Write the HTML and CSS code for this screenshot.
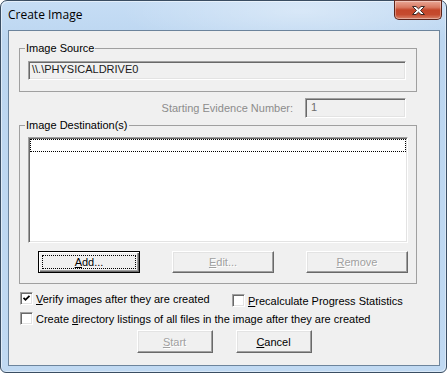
FILE: index.html
```html
<!DOCTYPE html>
<html lang="en">
<head>
    <meta charset="UTF-8">
    <meta name="viewport" content="width=device-width, initial-scale=1.0">
    <title>Create Image</title>
    <link rel="stylesheet" href="styles.css">
</head>
<body>
    <div class="window">
        <div class="titlebar">
            <span class="title">Create Image</span>
            <button class="close" title="Close">
                <svg width="15" height="11" viewBox="0 0 15 11">
                    <path d="M1.5 1.5h3.5l2.5 2.3l2.5-2.3h3.5l-4 4l4 4h-3.5l-2.5-2.3l-2.5 2.3h-3.5l4-4z" fill="#fff" stroke="#3d2a26" stroke-width="1" stroke-linejoin="round"/>
                </svg>
            </button>
        </div>

        <div class="client">
            <fieldset class="group source-group">
                <legend>Image Source</legend>
                <div class="field source-field">\\.\PHYSICALDRIVE0</div>
            </fieldset>

            <div class="evidence-row">
                <span class="disabled-label">Starting Evidence Number:</span>
                <div class="field evidence-field">1</div>
            </div>

            <fieldset class="group dest-group">
                <legend>Image Destination(s)</legend>
                <div class="listbox">
                    <div class="focus-row"></div>
                </div>
                <div class="btn-row">
                    <button class="btn default"><span class="focus"><u>A</u>dd...</span></button>
                    <button class="btn" disabled><span><u>E</u>dit...</span></button>
                    <button class="btn" disabled><span><u>R</u>emove</span></button>
                </div>
            </fieldset>

            <div class="options">
                <div class="opt-row">
                    <label class="check verify">
                        <span class="box">
                            <svg width="9" height="9" viewBox="0 0 9 9"><path d="M1.5 3.8l2 2l4-4" fill="none" stroke="#000" stroke-width="1.8"/></svg>
                        </span>
                        <span><u>V</u>erify images after they are created</span>
                    </label>
                    <label class="check precalc">
                        <span class="box"></span>
                        <span><u>P</u>recalculate Progress Statistics</span>
                    </label>
                </div>
                <div class="opt-row">
                    <label class="check">
                        <span class="box"></span>
                        <span>Create <u>d</u>irectory listings of all files in the image after they are created</span>
                    </label>
                </div>
            </div>

            <div class="actions">
                <button class="btn action" disabled><span><u>S</u>tart</span></button>
                <button class="btn action"><span><u>C</u>ancel</span></button>
            </div>
        </div>
    </div>
</body>
</html>
```

FILE: styles.css
```css
* {
    box-sizing: border-box;
}
body {
    margin: 0;
    background-color: #ffffff;
    font-family: 'Liberation Sans', Arial, sans-serif;
    font-size: 11px;
    color: #000;
}
.window {
    width: 447px;
    height: 373px;
    border: 1px solid #3a4d62;
    border-radius: 7px 7px 6px 6px;
    padding: 0 6px 6px 7px;
    display: flex;
    flex-direction: column;
    background:
        radial-gradient(ellipse 180px 40px at 300px 10px, rgba(255, 255, 255, 0.35), rgba(255, 255, 255, 0)),
        linear-gradient(#c6ddf5, #bcd6f0 40px, #c0d9f2);
    box-shadow: inset 1px 1px 0 rgba(255, 255, 255, 0.5), inset -1px -1px 0 rgba(255, 255, 255, 0.4);
}
.titlebar {
    height: 29px;
    display: flex;
    justify-content: space-between;
    align-items: flex-start;
}
.title {
    font-family: 'Open Sans', 'Noto Sans', sans-serif;
    font-size: 12px;
    line-height: 16px;
    padding-top: 6px;
    color: #000;
}
.close {
    width: 48px;
    height: 20px;
    margin: -1px -2px 0 0;
    padding: 0;
    border: 1px solid #5b231a;
    border-top-color: #7a3b2f;
    border-radius: 0 0 5px 5px;
    background: linear-gradient(#e9a796, #d97a62 35%, #c4462a 50%, #c54b2f 75%, #d9836a);
    box-shadow: inset 0 0 0 1px rgba(255, 255, 255, 0.35);
    display: flex;
    align-items: center;
    justify-content: center;
}
.client {
    height: 336px;
    border: 1px solid #6c849c;
    background-color: #f0f0f0;
    display: flex;
    flex-direction: column;
}
.group {
    margin: 0 0 0 10px;
    width: 398px;
    border: 1px solid #a0a0a0;
    min-width: 0;
}
.group legend {
    padding: 0 1px;
    margin-left: -3px;
    line-height: 13px;
}
.source-group {
    margin-top: 11px;
    padding: 6px 8px 11px;
}
.dest-group {
    margin-top: 1px;
    padding: 5px 8px 10px;
}
.field {
    height: 19px;
    line-height: 15px;
    background-color: #f0f0f0;
    border: 1px solid;
    border-color: #a0a0a0 #ffffff #ffffff #a0a0a0;
    box-shadow: inset 1px 1px 0 #696969, inset -1px -1px 0 #e3e3e3;
    padding-left: 3px;
}
.source-field {
    width: 378px;
    color: #1a1a1a;
}
.evidence-row {
    margin-top: 6px;
    display: flex;
    justify-content: flex-end;
    align-items: center;
    padding-right: 33px;
}
.disabled-label {
    color: #8c8c8c;
    margin-right: 12px;
}
.evidence-field {
    width: 101px;
    height: 20px;
    line-height: 16px;
    padding-left: 5px;
    color: #6d6d6d;
}
.listbox {
    height: 106px;
    background-color: #ffffff;
    border: 1px solid;
    border-color: #a0a0a0 #ffffff #ffffff #a0a0a0;
    box-shadow: inset 1px 1px 0 #696969, inset -1px -1px 0 #e3e3e3;
    padding: 1px;
}
.focus-row {
    height: 13px;
    border: 1px dotted #000;
}
.btn-row {
    margin-top: 8px;
    padding-left: 10px;
    display: flex;
    justify-content: space-between;
}
.btn {
    width: 102px;
    height: 22px;
    padding: 3px;
    font-family: inherit;
    font-size: 11px;
    color: #000;
    background-color: #f0f0f0;
    border: 1px solid;
    border-color: #ffffff #696969 #696969 #ffffff;
    box-shadow: inset -1px -1px 0 #a0a0a0, inset 1px 1px 0 #e3e3e3;
    display: flex;
}
.btn span {
    flex: 1;
    display: flex;
    align-items: center;
    justify-content: center;
    border: 1px solid transparent;
}
.btn.default {
    border-color: #000;
    box-shadow: inset 1px 1px 0 #ffffff, inset -1px -1px 0 #696969, inset -2px -2px 0 #a0a0a0;
}
.btn .focus {
    border: 1px dotted #000;
}
.btn:disabled {
    color: #a0a0a0;
    text-shadow: 1px 1px 0 #ffffff;
}
.options {
    margin: 7px 0 0 11px;
}
.opt-row {
    display: flex;
    align-items: flex-start;
    height: 15px;
}
.opt-row + .opt-row {
    margin-top: 5px;
}
.check {
    display: flex;
    align-items: center;
    height: 15px;
}
.verify {
    width: 212px;
}
.precalc {
    margin-top: 2px;
}
.box {
    width: 13px;
    height: 13px;
    margin-right: 3px;
    background-color: #ffffff;
    border: 1px solid;
    border-color: #a0a0a0 #ffffff #ffffff #a0a0a0;
    box-shadow: inset 1px 1px 0 #696969, inset -1px -1px 0 #e3e3e3;
    display: flex;
    align-items: center;
    justify-content: center;
}
.box svg {
    display: block;
}
.actions {
    margin-top: 4px;
    display: flex;
    justify-content: center;
    gap: 23px;
}
.btn.action {
    width: 76px;
    height: 23px;
}
```
